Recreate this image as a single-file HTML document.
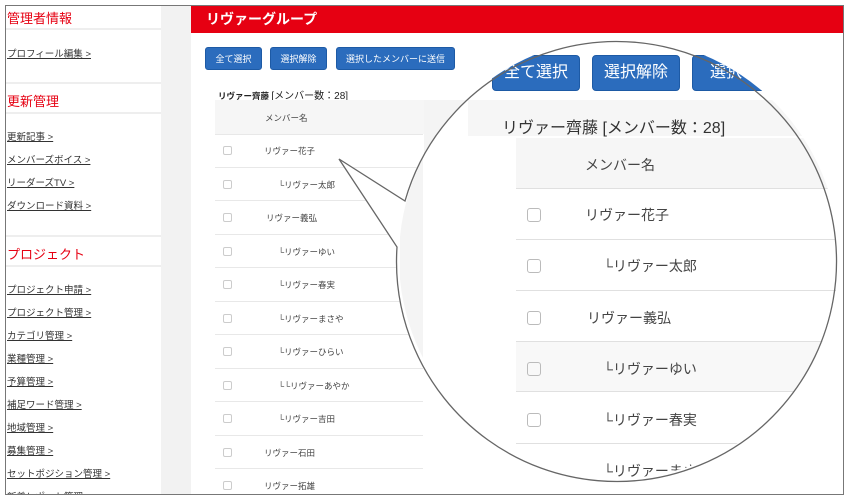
<!DOCTYPE html>
<html><head><meta charset="utf-8"><style>
*{margin:0;padding:0;box-sizing:border-box}
body{width:850px;height:500px;background:#fff;position:relative;overflow:hidden;font-family:"Liberation Sans","Noto Sans CJK JP",sans-serif;color:#333}
.a{position:absolute}
.frame{left:5px;top:5px;width:839px;height:490px;border:1px solid #777;overflow:hidden;background:#f2f2f2}
.side{left:0;top:0;width:155px;height:490px;background:#fff}
.h{color:#e60012;font-size:13px;left:1px}
.ln{left:0;width:155px;height:2px;background:#eee}
.lk{font-size:9.5px;text-decoration:underline;left:1px;color:#333;white-space:nowrap}
.main{left:185px;top:0;width:655px;height:490px;background:#fff}
.red{left:185px;top:0;width:655px;height:27px;background:#e60012;color:#fff;font-size:14px;font-weight:bold;padding:3px 0 0 15px}
.btn{background:#2b6cbd;border:1px solid #1d5aa5;border-radius:3px;color:#fff;font-size:9px;text-align:center;line-height:22px;height:23px;white-space:nowrap;overflow:hidden}
.row{left:215px;width:208px;height:1px;background:#e8e8e8}
.nm{font-size:8.5px;color:#444;white-space:nowrap}
.cb{width:9px;height:9px;border:1px solid #ccc;border-radius:2px;left:223px}
.big .nm{font-size:14px}
.big .cb{width:14px;height:14px;border:1.5px solid #bbb;border-radius:3px}
</style></head><body>
<div class="a frame">
 <div class="a side">
  <div class="a h" style="top:2px">管理者情報</div>
  <div class="a ln" style="top:22px"></div>
  <div class="a lk" style="top:40px">プロフィール編集 &gt;</div>
  <div class="a ln" style="top:76px"></div>
  <div class="a h" style="top:85px">更新管理</div>
  <div class="a ln" style="top:106px"></div>
  <div class="a lk" style="top:123px">更新記事 &gt;</div>
  <div class="a lk" style="top:146px">メンバーズボイス &gt;</div>
  <div class="a lk" style="top:169px">リーダーズTV &gt;</div>
  <div class="a lk" style="top:192px">ダウンロード資料 &gt;</div>
  <div class="a ln" style="top:229px"></div>
  <div class="a h" style="top:238px">プロジェクト</div>
  <div class="a ln" style="top:259px"></div>
  <div class="a lk" style="top:276px">プロジェクト申請 &gt;</div>
  <div class="a lk" style="top:299px">プロジェクト管理 &gt;</div>
  <div class="a lk" style="top:322px">カテゴリ管理 &gt;</div>
  <div class="a lk" style="top:345px">業種管理 &gt;</div>
  <div class="a lk" style="top:368px">予算管理 &gt;</div>
  <div class="a lk" style="top:391px">補足ワード管理 &gt;</div>
  <div class="a lk" style="top:414px">地域管理 &gt;</div>
  <div class="a lk" style="top:437px">募集管理 &gt;</div>
  <div class="a lk" style="top:460px">セットポジション管理 &gt;</div>
  <div class="a lk" style="top:483px">新着レポート管理 &gt;</div>
 </div>
 <div class="a main"></div>
 <div class="a red">リヴァーグループ</div>
</div>
<div class="a btn" style="left:205px;top:47px;width:57px">全て選択</div>
<div class="a btn" style="left:270px;top:47px;width:57px">選択解除</div>
<div class="a btn" style="left:336px;top:47px;width:119px">選択したメンバーに送信</div>
<div class="a nm" style="left:218px;top:87px;font-weight:bold;color:#222">リヴァー齊藤 <span style="font-weight:normal;font-size:10px">[メンバー数：28]</span></div>
<div class="a" style="left:424px;top:100px;width:46px;height:270px;background:#f4f4f4"></div>
<div class="a" style="left:215px;top:100px;width:209px;height:34px;background:#f6f6f6"></div>
<div class="a nm" style="left:265px;top:112px">メンバー名</div>
<div class="a row" style="top:134px"></div><div class="a row" style="top:167px"></div><div class="a row" style="top:200px"></div><div class="a row" style="top:234px"></div><div class="a row" style="top:267px"></div><div class="a row" style="top:301px"></div><div class="a row" style="top:334px"></div><div class="a row" style="top:368px"></div><div class="a row" style="top:401px"></div><div class="a row" style="top:435px"></div><div class="a row" style="top:468px"></div>
<div class="a cb" style="top:146px"></div><div class="a nm" style="left:264px;top:145px">リヴァー花子</div>
<div class="a cb" style="top:180px"></div><div class="a nm" style="left:278px;top:179px">└リヴァー太郎</div>
<div class="a cb" style="top:213px"></div><div class="a nm" style="left:266px;top:212px">リヴァー義弘</div>
<div class="a cb" style="top:247px"></div><div class="a nm" style="left:278px;top:246px">└リヴァーゆい</div>
<div class="a cb" style="top:280px"></div><div class="a nm" style="left:278px;top:279px">└リヴァー春実</div>
<div class="a cb" style="top:314px"></div><div class="a nm" style="left:278px;top:313px">└リヴァーまさや</div>
<div class="a cb" style="top:347px"></div><div class="a nm" style="left:278px;top:346px">└リヴァーひらい</div>
<div class="a cb" style="top:381px"></div><div class="a nm" style="left:278px;top:380px">└└リヴァーあやか</div>
<div class="a cb" style="top:414px"></div><div class="a nm" style="left:278px;top:413px">└リヴァー吉田</div>
<div class="a cb" style="top:448px"></div><div class="a nm" style="left:264px;top:447px">リヴァー石田</div>
<div class="a cb" style="top:481px"></div><div class="a nm" style="left:264px;top:480px">リヴァー拓雄</div>

<svg class="a" style="left:0;top:0" width="850" height="500"><path d="M339,159 L405,201 A220,220 0 1 1 397,247 Z" fill="#fff"/></svg>
<div class="a big" style="left:399px;top:38px;width:440px;height:440px;border-radius:50%;overflow:hidden;background:#fff">
 <div style="position:absolute;left:-399px;top:-38px;width:850px;height:500px">
  <div class="a" style="left:400px;top:100px;width:23px;height:300px;background:#f4f4f4"></div>
  <div class="a" style="left:468px;top:100px;width:342px;height:36px;background:#f6f6f6"></div>
  <div class="a btn" style="left:492px;top:55px;width:88px;height:36px;line-height:34px;font-size:16px;border-radius:4px">全て選択</div>
  <div class="a btn" style="left:592px;top:55px;width:88px;height:36px;line-height:34px;font-size:16px;border-radius:4px">選択解除</div>
  <div class="a btn" style="left:692px;top:55px;width:120px;height:36px;line-height:34px;font-size:16px;border-radius:4px;text-align:left;padding-left:17px">選択したメンバー</div>
  <div class="a nm" style="left:502px;top:114px;font-size:16px;color:#333">リヴァー齊藤 [メンバー数：28]</div>
  <div class="a" style="left:516px;top:138px;width:320px;height:50px;background:#f6f6f6"></div>
  <div class="a nm" style="left:585px;top:155px;font-size:14px">メンバー名</div>
  <div class="a" style="left:516px;top:188px;width:320px;height:1px;background:#e0e0e0"></div>
  <div class="a" style="left:516px;top:239px;width:320px;height:1px;background:#e0e0e0"></div>
  <div class="a" style="left:516px;top:290px;width:320px;height:1px;background:#e0e0e0"></div>
  <div class="a" style="left:516px;top:341px;width:320px;height:51px;background:#f8f8f8;border-top:1px solid #e0e0e0;border-bottom:1px solid #e0e0e0"></div>
  <div class="a" style="left:516px;top:443px;width:320px;height:1px;background:#e0e0e0"></div>
  <div class="a cb" style="left:527px;top:208px"></div><div class="a nm" style="left:585px;top:205px">リヴァー花子</div>
  <div class="a cb" style="left:527px;top:259px"></div><div class="a nm" style="left:603px;top:256px">└リヴァー太郎</div>
  <div class="a cb" style="left:527px;top:311px"></div><div class="a nm" style="left:587px;top:308px">リヴァー義弘</div>
  <div class="a cb" style="left:527px;top:362px"></div><div class="a nm" style="left:603px;top:359px">└リヴァーゆい</div>
  <div class="a cb" style="left:527px;top:413px"></div><div class="a nm" style="left:603px;top:410px">└リヴァー春実</div>
  <div class="a nm" style="left:603px;top:461px">└リヴァーまさや</div>
 </div>
</div>
<svg class="a" style="left:0;top:0" width="850" height="500"><path d="M339,159 L405,201 A220,220 0 1 1 397,247 Z" fill="none" stroke="#666" stroke-width="1.3"/></svg>
</body></html>
